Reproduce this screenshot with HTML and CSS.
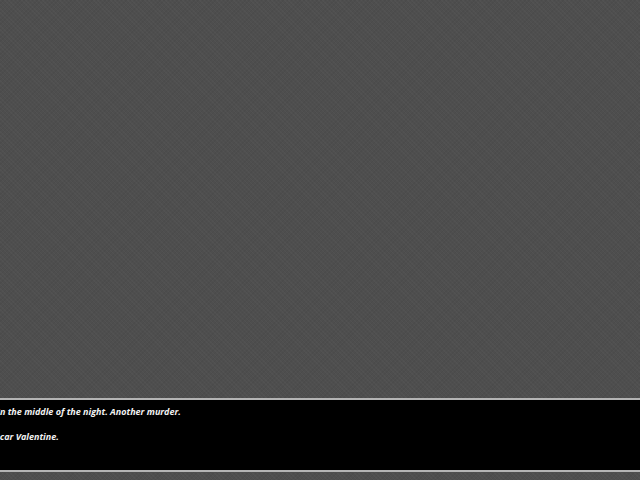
FILE: index.html
```html
<!DOCTYPE html>
<html lang="en">
<head>
  <meta charset="UTF-8">
  <title>Oscar Valentine</title>
  <link rel="stylesheet" href="styles.css">
</head>
<body>
  <div class="scene">
    <div class="stage"></div>
    <div class="dialogue">
      <p class="line first">In the middle of the night. Another murder.</p>
      <p class="line second">Oscar Valentine.</p>
    </div>
  </div>
</body>
</html>
```

FILE: styles.css
```css
html, body {
  margin: 0;
  padding: 0;
  height: 100%;
  overflow: hidden;
}
body {
  font-family: "Open Sans", "Liberation Sans", sans-serif;
  background-color: #4e4e4e;
  background-image: repeating-linear-gradient(45deg, rgba(255,255,255,0.025) 0 1px, transparent 1px 3px),
    repeating-linear-gradient(-45deg, rgba(0,0,0,0.04) 0 1px, transparent 1px 3px);
}
.scene {
  display: flex;
  flex-direction: column;
  height: 100vh;
}
.stage {
  height: 398px;
  flex-shrink: 0;
}
.dialogue {
  height: 65px;
  background-color: #000;
  border-top: 2px solid #b4b4b4;
  border-bottom: 2px solid #b4b4b4;
  overflow: hidden;
  padding-top: 5px;
  flex-shrink: 0;
}
.line {
  margin: 0 0 11px;
  color: #f2f2f2;
  font-size: 9px;
  font-weight: bold;
  font-style: italic;
  line-height: 14px;
  white-space: nowrap;
}
.first {
  margin-left: -3px;
}
.second {
  margin-left: -11px;
}
```
